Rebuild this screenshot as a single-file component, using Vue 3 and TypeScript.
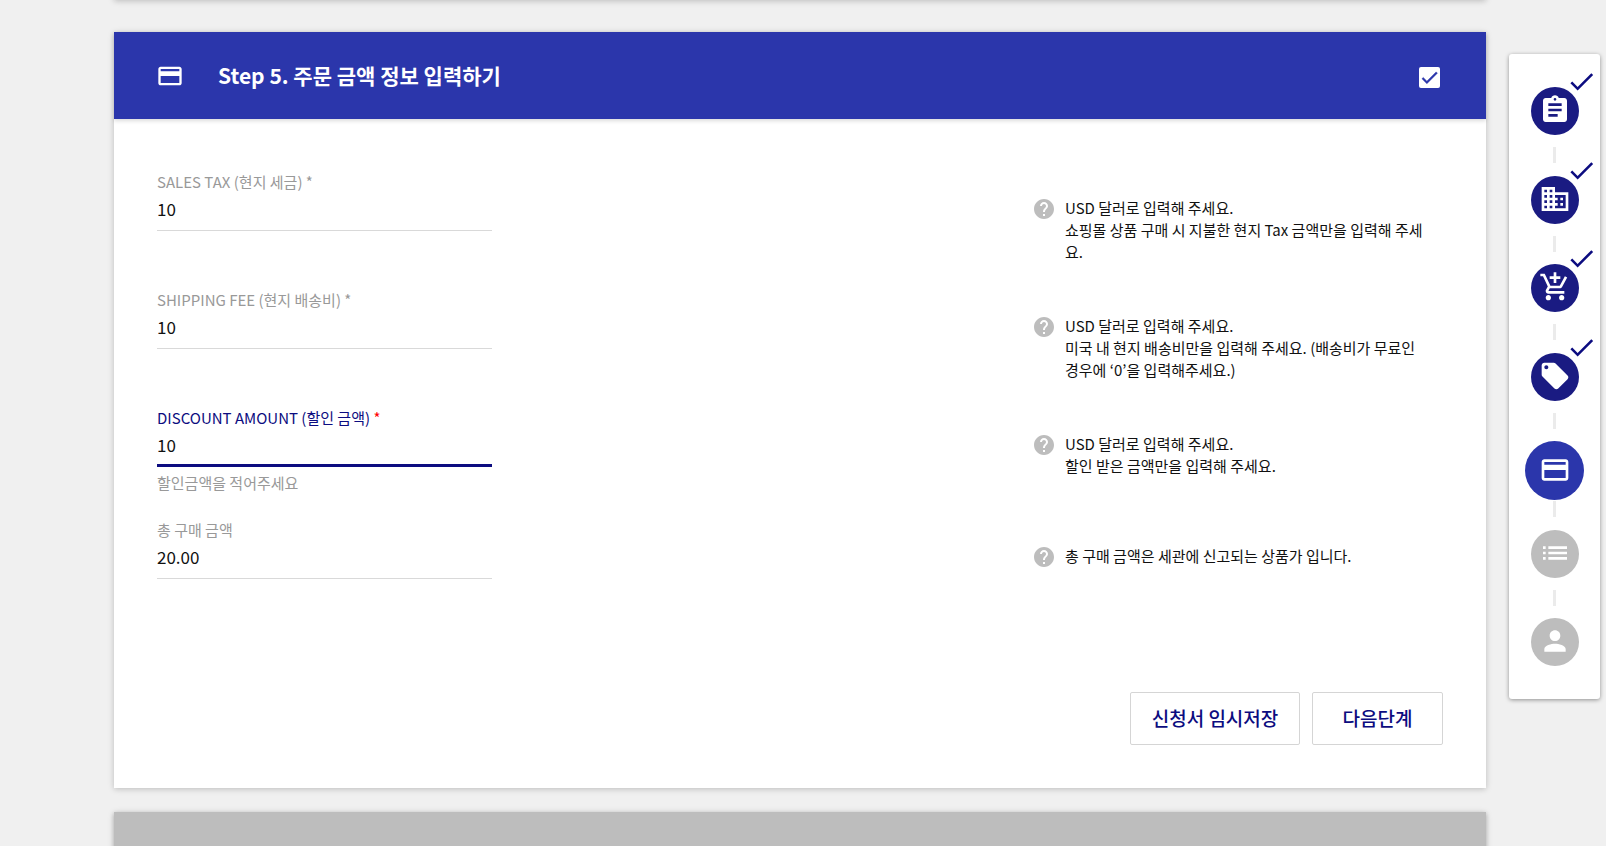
<script setup lang="ts">
import { reactive, ref } from 'vue'

interface Field {
  id: string
  label: string
  required: boolean
  value: string
  active?: boolean
  hint?: string
  help: string[]
}

interface Step {
  name: string
  state: 'done' | 'current' | 'todo'
  icon: string
}

const cardIcon =
  'M20 4H4c-1.11 0-1.99.89-1.99 2L2 18c0 1.11.89 2 2 2h16c1.11 0 2-.89 2-2V6c0-1.11-.89-2-2-2zm0 14H4v-6h16v6zm0-10H4V6h16v2z'
const checkIcon = 'M9 16.17L4.83 12l-1.42 1.41L9 19 21 7l-1.41-1.41z'
const helpIcon =
  'M12 2C6.48 2 2 6.48 2 12s4.48 10 10 10 10-4.48 10-10S17.52 2 12 2zm1 17h-2v-2h2v2zm2.07-7.75l-.9.92C13.45 12.9 13 13.5 13 15h-2v-.5c0-1.1.45-2.1 1.17-2.83l1.24-1.26c.37-.36.59-.86.59-1.41 0-1.1-.9-2-2-2s-2 .9-2 2H8c0-2.21 1.79-4 4-4s4 1.79 4 4c0 .88-.36 1.68-.93 2.25z'

const confirmed = ref(true)

const fields = reactive<Field[]>([
  {
    id: 'sales-tax',
    label: 'SALES TAX (현지 세금)',
    required: true,
    value: '10',
    help: ['USD 달러로 입력해 주세요.', '쇼핑몰 상품 구매 시 지불한 현지 Tax 금액만을 입력해 주세요.'],
  },
  {
    id: 'shipping-fee',
    label: 'SHIPPING FEE (현지 배송비)',
    required: true,
    value: '10',
    help: [
      'USD 달러로 입력해 주세요.',
      '미국 내 현지 배송비만을 입력해 주세요. (배송비가 무료인 경우에 ‘0’을 입력해주세요.)',
    ],
  },
  {
    id: 'discount-amount',
    label: 'DISCOUNT AMOUNT (할인 금액)',
    required: true,
    value: '10',
    active: true,
    hint: '할인금액을 적어주세요',
    help: ['USD 달러로 입력해 주세요.', '할인 받은 금액만을 입력해 주세요.'],
  },
  {
    id: 'total',
    label: '총 구매 금액',
    required: false,
    value: '20.00',
    help: ['총 구매 금액은 세관에 신고되는 상품가 입니다.'],
  },
])

const steps: Step[] = [
  {
    name: 'Step 1',
    state: 'done',
    icon: 'M19 3h-4.18C14.4 1.84 13.3 1 12 1c-1.3 0-2.4.84-2.82 2H5c-1.1 0-2 .9-2 2v14c0 1.1.9 2 2 2h14c1.1 0 2-.9 2-2V5c0-1.1-.9-2-2-2zm-7 0c.55 0 1 .45 1 1s-.45 1-1 1-1-.45-1-1 .45-1 1-1zm2 14H7v-2h7v2zm3-4H7v-2h10v2zm0-4H7V7h10v2z',
  },
  {
    name: 'Step 2',
    state: 'done',
    icon: 'M12 7V3H2v18h20V7H12zM6 19H4v-2h2v2zm0-4H4v-2h2v2zm0-4H4V9h2v2zm0-4H4V5h2v2zm4 12H8v-2h2v2zm0-4H8v-2h2v2zm0-4H8V9h2v2zm0-4H8V5h2v2zm10 12h-8v-2h2v-2h-2v-2h2v-2h-2V9h8v10zm-2-8h-2v2h2v-2zm0 4h-2v2h2v-2z',
  },
  {
    name: 'Step 3',
    state: 'done',
    icon: 'M11 9h2V6h3V4h-3V1h-2v3H8v2h3v3zm-4 9c-1.1 0-1.99.9-1.99 2S5.9 22 7 22s2-.9 2-2-.9-2-2-2zm10 0c-1.1 0-1.99.9-1.99 2s.89 2 1.99 2 2-.9 2-2-.9-2-2-2zm-9.83-3.25l.03-.12.9-1.63h7.45c.75 0 1.41-.41 1.75-1.03l3.86-7.01L19.42 4h-.01l-1.1 2-2.76 5H8.53l-.13-.27L6.16 6l-.95-2-.94-2H1v2h2l3.6 7.59-1.35 2.45c-.16.28-.25.61-.25.96 0 1.1.9 2 2 2h12v-2H7.42c-.13 0-.25-.11-.25-.25z',
  },
  {
    name: 'Step 4',
    state: 'done',
    icon: 'M21.41 11.58l-9-9C12.05 2.22 11.55 2 11 2H4c-1.1 0-2 .9-2 2v7c0 .55.22 1.05.59 1.42l9 9c.36.36.86.58 1.41.58.55 0 1.05-.22 1.41-.59l7-7c.37-.36.59-.86.59-1.41 0-.55-.23-1.06-.59-1.42zM5.5 7C4.67 7 4 6.33 4 5.5S4.67 4 5.5 4 7 4.67 7 5.5 6.33 7 5.5 7z',
  },
  { name: 'Step 5', state: 'current', icon: cardIcon },
  {
    name: 'Step 6',
    state: 'todo',
    icon: 'M3 13h2v-2H3v2zm0 4h2v-2H3v2zm0-8h2V7H3v2zm4 4h14v-2H7v2zm0 4h14v-2H7v2zM7 7v2h14V7H7z',
  },
  {
    name: 'Step 7',
    state: 'todo',
    icon: 'M12 12c2.21 0 4-1.79 4-4s-1.79-4-4-4-4 1.79-4 4 1.79 4 4 4zm0 2c-2.67 0-8 1.34-8 4v2h16v-2c0-2.66-5.33-4-8-4z',
  },
]
</script>

<template>
  <div class="page">
    <main class="cards">
      <div class="card previous"></div>
      <section class="card">
        <header class="card-header">
          <svg class="header-icon" viewBox="0 0 24 24" aria-hidden="true"><path :d="cardIcon" /></svg>
          <h2 class="title">Step 5. 주문 금액 정보 입력하기</h2>
          <label class="confirm">
            <input v-model="confirmed" type="checkbox" aria-label="Step 5" />
            <svg v-if="confirmed" viewBox="0 0 24 24" aria-hidden="true"><path :d="checkIcon" /></svg>
          </label>
        </header>

        <form class="body" @submit.prevent>
          <div v-for="f in fields" :key="f.id" class="row" :class="{ active: f.active }">
            <div class="field">
              <label :for="f.id">{{ f.label }}<span v-if="f.required" class="star"> *</span></label>
              <input :id="f.id" v-model="f.value" type="text" />
              <p v-if="f.hint" class="hint">{{ f.hint }}</p>
            </div>
            <div class="help">
              <svg viewBox="0 0 24 24" aria-hidden="true"><path :d="helpIcon" /></svg>
              <div class="help-text">
                <p v-for="line in f.help" :key="line">{{ line }}</p>
              </div>
            </div>
          </div>
          <div class="actions">
            <button type="button" class="save">신청서 임시저장</button>
            <button type="submit" class="next">다음단계</button>
          </div>
        </form>
      </section>
      <section class="card">
        <header class="card-header pending"></header>
      </section>
    </main>

    <nav class="stepper">
      <ol>
        <template v-for="(s, i) in steps" :key="s.name">
          <li v-if="i > 0" class="dash" aria-hidden="true"></li>
          <li class="step">
            <button type="button" class="dot" :class="s.state" :aria-label="s.name">
              <svg viewBox="0 0 24 24" aria-hidden="true"><path :d="s.icon" /></svg>
            </button>
            <svg v-if="s.state === 'done'" class="tick" viewBox="0 0 24 24" aria-hidden="true">
              <path :d="checkIcon" />
            </svg>
          </li>
        </template>
      </ol>
    </nav>
  </div>
</template>

<style>
body {
  background: #f0f0f0;
}
</style>

<style scoped>
.page {
  --blue: #2b36ab;
  --navy: #1a1b82;
  --grey: #bdbdbd;
  box-sizing: border-box;
  display: flex;
  align-items: flex-start;
  gap: 23px;
  height: 100vh;
  overflow: hidden;
  padding: 0 6px 0 114px;
  background: #f0f0f0;
  color: #111;
  font-family: 'Noto Sans CJK KR', 'Noto Sans', sans-serif;
  font-size: 15px;
}

.page * {
  box-sizing: border-box;
}

svg {
  display: block;
  fill: currentColor;
  flex: none;
}

p,
h2 {
  margin: 0;
}

.cards {
  flex: 1;
  min-width: 0;
}

.card {
  background: #fff;
  box-shadow: 0 1px 6px rgba(0, 0, 0, 0.22);
}

.card + .card {
  margin-top: 24px;
}

.card.previous {
  height: 24px;
  margin-top: -24px;
}

.card.previous + .card {
  margin-top: 32px;
}

.card-header {
  display: flex;
  align-items: center;
  min-height: 87px;
  padding: 0 43px 0 42px;
  background: var(--blue);
  color: #fff;
  box-shadow: 0 2px 4px rgba(0, 0, 0, 0.14);
}

.card-header.pending {
  background: var(--grey);
}

.header-icon {
  width: 28px;
  height: 28px;
}

.title {
  flex: 1;
  margin-left: 34px;
  padding-bottom: 2px;
  font-size: 21px;
  line-height: 30px;
  font-weight: 700;
}

.confirm {
  position: relative;
  display: flex;
  margin: 4px 3px 0 0;
}

.confirm input {
  appearance: none;
  width: 21px;
  height: 21px;
  margin: 0;
  border-radius: 2px;
  background: #fff;
}

.confirm svg {
  position: absolute;
  inset: 0;
  width: 21px;
  height: 21px;
  color: var(--blue);
  stroke: currentColor;
  stroke-width: 0.6;
  pointer-events: none;
}

.body {
  padding: 52px 43px 43px;
}

.row {
  display: flex;
  justify-content: space-between;
  align-items: flex-start;
  min-height: 118px;
}

.row.active {
  min-height: 112px;
}

.row:nth-child(4) {
  min-height: 60px;
}

.field {
  width: 335px;
}

.field label {
  display: block;
  line-height: 22px;
  color: #999;
}

.field input {
  display: block;
  width: 100%;
  height: 38px;
  padding: 0 0 7px;
  border: 0;
  border-bottom: 1px solid #d9d9d9;
  border-radius: 0;
  outline: 0;
  background: none;
  color: #111;
  font-family: inherit;
  font-size: 17px;
}

.active .field label {
  color: #0c0c80;
}

.field .star {
  font-weight: inherit;
}

.active .field .star {
  color: #f00;
}

.active .field input {
  padding-bottom: 5px;
  border-bottom: 3px solid #0c0c80;
}

.hint {
  margin-top: 5px;
  line-height: 22px;
  color: #999;
}

.help {
  display: flex;
  gap: 9px;
  width: 411px;
  padding-top: 26px;
}

.help svg {
  width: 24px;
  height: 24px;
  color: var(--grey);
}

.help-text {
  width: 362px;
  line-height: 22px;
}

.actions {
  display: flex;
  justify-content: flex-end;
  gap: 12px;
  margin-top: 113px;
}

.actions button {
  height: 53px;
  padding: 0 0 3px;
  border: 1px solid #d5d5d5;
  border-radius: 2px;
  background: #fff;
  color: #0c0c80;
  font-family: inherit;
  font-size: 19px;
  font-weight: 500;
}

.save {
  width: 170px;
}

.next {
  width: 131px;
}

.stepper {
  flex: none;
  width: 91px;
  margin-top: 54px;
  padding: 33px 0;
  border-radius: 3px;
  background: #fff;
  box-shadow: 0 1px 4px rgba(0, 0, 0, 0.4);
}

.stepper ol {
  display: flex;
  flex-direction: column;
  align-items: center;
  justify-content: space-between;
  min-height: 579px;
  margin: 0;
  padding: 0;
  list-style: none;
}

.step {
  position: relative;
  display: flex;
  justify-content: center;
  width: 48px;
  height: 48px;
}

.dash {
  width: 3px;
  height: 16px;
  background: #ebebeb;
}

.dot {
  display: flex;
  align-items: center;
  justify-content: center;
  flex: none;
  width: 48px;
  height: 48px;
  padding: 0 0 2px;
  border: 0;
  border-radius: 50%;
  background: var(--navy);
  color: #fff;
}

.dot svg {
  width: 32px;
  height: 32px;
}

.dot.current {
  width: 59px;
  height: 59px;
  background: var(--blue);
}

.dot.todo {
  background: var(--grey);
}

.tick {
  position: absolute;
  top: -21px;
  right: -18px;
  width: 31px;
  height: 31px;
  color: #0c0c80;
}
</style>
